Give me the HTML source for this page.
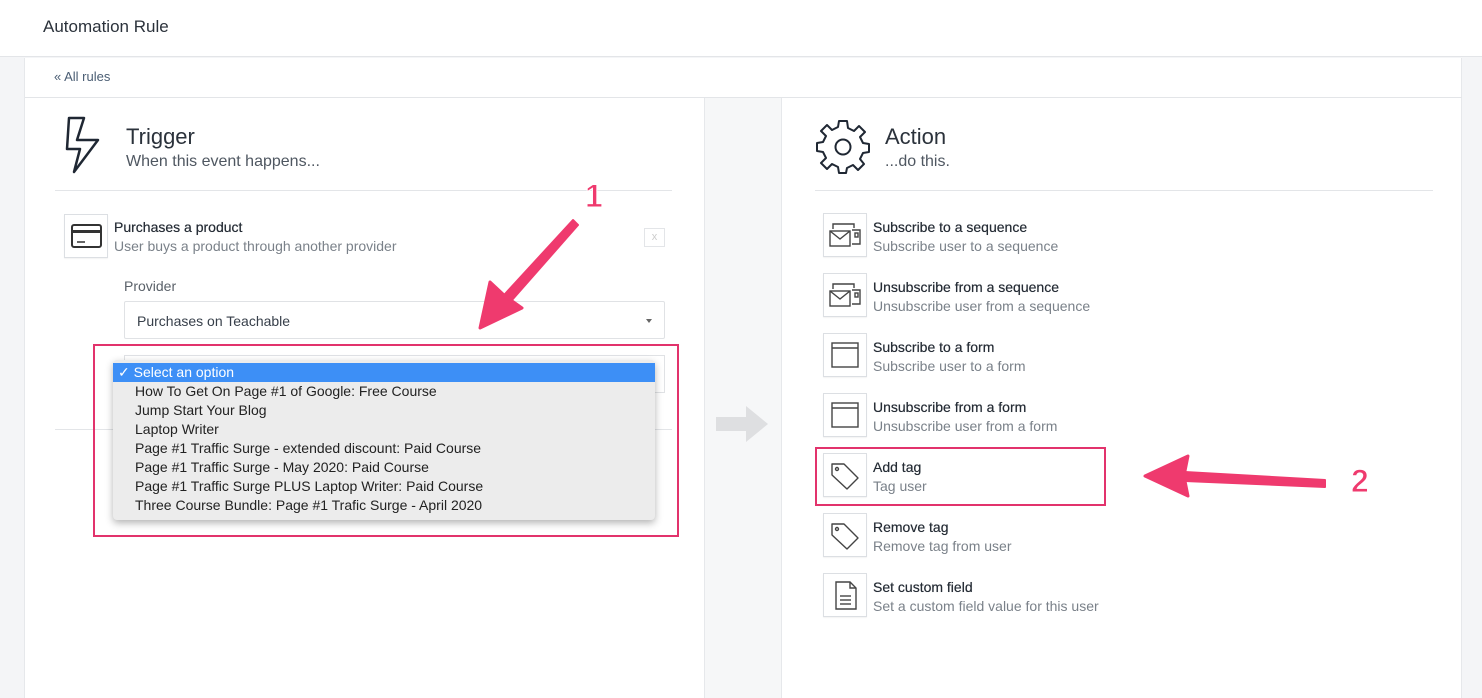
<!DOCTYPE html>
<html><head><style>
*{box-sizing:border-box;margin:0;padding:0}
body{width:1482px;height:687px;overflow:hidden;background:#f4f5f7;font-family:"Liberation Sans",sans-serif;color:#373f4a;position:relative}
.abs{position:absolute}
.hdr{left:0;top:0;width:1482px;height:57px;background:#fff;border-bottom:1px solid #e3e5e8}
.card{left:24px;top:58px;width:1438px;height:640px;background:#fff;border-left:1px solid #e6e8eb;border-right:1px solid #e6e8eb}
.ib{width:44px;height:44px;border:1px solid #dcdfe3;background:#fff;box-shadow:0 1px 1px rgba(0,0,0,.05)}
.t{font-size:14px;color:#262d36;font-weight:normal;text-shadow:0 0 0.4px #262d36}
.s{font-size:14px;color:#7a8189}
.opt{font-size:14px;color:#222;height:19px;line-height:19px;padding-left:22px}
</style></head><body>
<div class="abs hdr"><div class="abs" style="left:43px;top:17px;font-size:17px;color:#2b323b">Automation Rule</div></div>
<div class="abs card"></div>
<div class="abs" style="left:54px;top:69px;font-size:13px;color:#4a5d73">« All rules</div>
<div class="abs" style="left:25px;top:97px;width:1437px;height:1px;background:#e3e5e8"></div>
<div class="abs" style="left:704px;top:98px;width:78px;height:600px;background:#f6f7f8;border-left:1px solid #e6e8eb;border-right:1px solid #e6e8eb"></div>
<!-- trigger -->
<svg class="abs" style="left:64px;top:116px" width="40" height="60" viewBox="0 0 40 60"><path d="M5 2 L20 2 L13 24 L34 24 L10 56 L16 33 L3 33 Z" fill="none" stroke="#1f2733" stroke-width="2.5" stroke-linejoin="round"/></svg>
<div class="abs" style="left:126px;top:124px;font-size:22px;color:#2b323b">Trigger</div>
<div class="abs" style="left:126px;top:153px;font-size:16px;color:#4f5761">When this event happens...</div>
<div class="abs" style="left:55px;top:190px;width:617px;height:1px;background:#e3e5e8"></div>
<div class="abs ib" style="left:64px;top:214px"><svg width="44" height="44"><rect x="7" y="10" width="29" height="22" rx="2" fill="none" stroke="#333" stroke-width="2"/><rect x="7" y="15" width="29" height="3" fill="#333"/><line x1="12" y1="27" x2="20" y2="27" stroke="#333" stroke-width="1.5"/></svg></div>
<div class="abs t" style="left:114px;top:219px">Purchases a product</div>
<div class="abs s" style="left:114px;top:238px">User buys a product through another provider</div>
<div class="abs" style="left:644px;top:228px;width:21px;height:19px;border:1px solid #e3e5e8;font-size:11px;color:#ccc;text-align:center;line-height:17px">x</div>
<div class="abs s" style="left:124px;top:278px;color:#5a6169">Provider</div>
<div class="abs" style="left:124px;top:301px;width:541px;height:38px;border:1px solid #e0e2e5;border-radius:2px;background:#fff"><div class="abs" style="left:12px;top:11px;font-size:14px;color:#373f4a">Purchases on Teachable</div><div class="abs" style="right:12px;top:17px;width:0;height:0;border-left:3px solid transparent;border-right:3px solid transparent;border-top:4px solid #666"></div></div>
<div class="abs" style="left:55px;top:429px;width:617px;height:1px;background:#e3e5e8"></div>
<div class="abs" style="left:124px;top:355px;width:541px;height:38px;border:1px solid #e0e2e5;background:#fff"></div>
<!-- dropdown -->
<div class="abs" style="left:113px;top:360px;width:542px;height:160px;background:#ececec;border-radius:4px;box-shadow:0 3px 8px rgba(0,0,0,.3);padding-top:3px">
<div class="opt" style="background:#3d8ff6;color:#fff;padding-left:5px">✓ Select an option</div>
<div class="opt">How To Get On Page #1 of Google: Free Course</div>
<div class="opt">Jump Start Your Blog</div>
<div class="opt">Laptop Writer</div>
<div class="opt">Page #1 Traffic Surge - extended discount: Paid Course</div>
<div class="opt">Page #1 Traffic Surge - May 2020: Paid Course</div>
<div class="opt">Page #1 Traffic Surge PLUS Laptop Writer: Paid Course</div>
<div class="opt">Three Course Bundle: Page #1 Trafic Surge - April 2020</div>
</div>
<div class="abs" style="left:93px;top:344px;width:586px;height:193px;border:2px solid #e2336c"></div>
<!-- middle arrow -->
<svg class="abs" style="left:716px;top:406px" width="52" height="36"><path d="M0 11 H30 V0 L52 18 L30 36 V25 H0 Z" fill="#dedfe1"/></svg>
<!-- action -->
<svg class="abs" style="left:814px;top:118px" width="58" height="58" viewBox="-29 -29 58 58"><g fill="none" stroke="#1f2733" stroke-width="2"><path d="M-4 -26 L4 -26 L5 -19 L11 -16 L16 -21 L22 -15 L17 -10 L20 -4 L26 -3 L26 5 L20 6 L17 12 L21 17 L15 23 L10 18 L4 21 L3 26 L-4 26 L-5 20 L-11 17 L-16 22 L-22 16 L-17 11 L-20 5 L-26 4 L-26 -4 L-20 -5 L-17 -11 L-22 -16 L-16 -22 L-11 -17 L-5 -20 Z" stroke-linejoin="round"/><circle r="7.5"/></g></svg>
<div class="abs" style="left:885px;top:124px;font-size:22px;color:#2b323b">Action</div>
<div class="abs" style="left:885px;top:153px;font-size:16px;color:#4f5761">...do this.</div>
<div class="abs" style="left:815px;top:190px;width:618px;height:1px;background:#e3e5e8"></div>

<div class="abs ib" style="left:823px;top:213px"><svg width="44" height="44"><g fill="none" stroke="#444" stroke-width="1.4"><path d="M9 15 V10 H30 V14"/><rect x="6" y="17" width="20" height="15"/><path d="M6 17 L16 25 L26 17"/><path d="M28 16 H36 V30 H28"/><rect x="31" y="19" width="3" height="4"/></g></svg></div>
<div class="abs t" style="left:873px;top:219px">Subscribe to a sequence</div><div class="abs s" style="left:873px;top:238px">Subscribe user to a sequence</div>
<div class="abs ib" style="left:823px;top:273px"><svg width="44" height="44"><g fill="none" stroke="#444" stroke-width="1.4"><path d="M9 15 V10 H30 V14"/><rect x="6" y="17" width="20" height="15"/><path d="M6 17 L16 25 L26 17"/><path d="M28 16 H36 V30 H28"/><rect x="31" y="19" width="3" height="4"/></g></svg></div>
<div class="abs t" style="left:873px;top:279px">Unsubscribe from a sequence</div><div class="abs s" style="left:873px;top:298px">Unsubscribe user from a sequence</div>
<div class="abs ib" style="left:823px;top:333px"><svg width="44" height="44"><g fill="none" stroke="#444" stroke-width="1.4"><rect x="8" y="9" width="26" height="24"/><line x1="8" y1="14" x2="34" y2="14"/></g></svg></div>
<div class="abs t" style="left:873px;top:339px">Subscribe to a form</div><div class="abs s" style="left:873px;top:358px">Subscribe user to a form</div>
<div class="abs ib" style="left:823px;top:393px"><svg width="44" height="44"><g fill="none" stroke="#444" stroke-width="1.4"><rect x="8" y="9" width="26" height="24"/><line x1="8" y1="14" x2="34" y2="14"/></g></svg></div>
<div class="abs t" style="left:873px;top:399px">Unsubscribe from a form</div><div class="abs s" style="left:873px;top:418px">Unsubscribe user from a form</div>
<div class="abs ib" style="left:823px;top:453px"><svg width="44" height="44"><g fill="none" stroke="#444" stroke-width="1.4"><path d="M8 10 H20 L34 24 L23 35 L8 21 Z" stroke-linejoin="round"/><circle cx="13" cy="15" r="1.5"/></g></svg></div>
<div class="abs t" style="left:873px;top:459px">Add tag</div><div class="abs s" style="left:873px;top:478px">Tag user</div>
<div class="abs" style="left:815px;top:447px;width:291px;height:59px;border:2px solid #e2336c"></div>
<div class="abs ib" style="left:823px;top:513px"><svg width="44" height="44"><g fill="none" stroke="#444" stroke-width="1.4"><path d="M8 10 H20 L34 24 L23 35 L8 21 Z" stroke-linejoin="round"/><circle cx="13" cy="15" r="1.5"/></g></svg></div>
<div class="abs t" style="left:873px;top:519px">Remove tag</div><div class="abs s" style="left:873px;top:538px">Remove tag from user</div>
<div class="abs ib" style="left:823px;top:573px"><svg width="44" height="44"><g fill="none" stroke="#444" stroke-width="1.4"><path d="M12 8 H26 L32 14 V35 H12 Z"/><path d="M26 8 V14 H32"/><line x1="16" y1="22" x2="27" y2="22"/><line x1="16" y1="26" x2="27" y2="26"/><line x1="16" y1="30" x2="27" y2="30"/></g></svg></div>
<div class="abs t" style="left:873px;top:579px">Set custom field</div><div class="abs s" style="left:873px;top:598px">Set a custom field value for this user</div>

<!-- annotation arrows -->
<svg class="abs" style="left:0;top:0" width="1482" height="687">
<g fill="#ef3a6e" stroke="#ef3a6e" stroke-linejoin="round">
<path d="M573 220 L578 225 L512 300 L505 294 Z" stroke-width="2"/>
<path d="M480 328 L490 282 L505 296 L522 308 Z" stroke-width="3"/>
<path d="M1325 480 L1325 487 L1185 481 L1185 472 Z" stroke-width="2"/>
<path d="M1145 476 L1188 456 L1184 476 L1188 496 Z" stroke-width="3"/>
</g>
<text x="585" y="207" font-family="Liberation Sans" font-weight="bold" font-size="32" fill="#ef3a6e" stroke="#fff" stroke-width="1">1</text>
<text x="1351" y="492" font-family="Liberation Sans" font-weight="bold" font-size="32" fill="#ef3a6e" stroke="#fff" stroke-width="1">2</text>
</svg>
</body></html>
